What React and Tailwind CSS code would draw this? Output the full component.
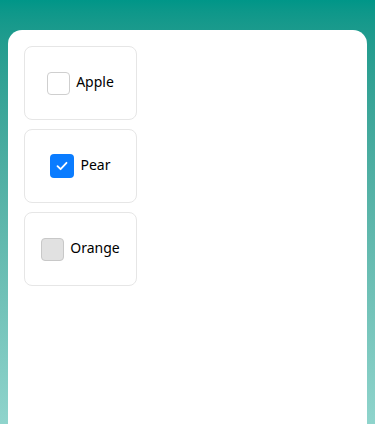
import React, { useState } from 'react'

const fruits = [
    { name: 'Apple', checked: false, disabled: false },
    { name: 'Pear', checked: true, disabled: false },
    { name: 'Orange', checked: false, disabled: true },
]

const FruitBox = ({ fruit }) => {
    const [checked, setChecked] = useState(fruit.checked)

    let boxClass = 'w-[23px] h-[23px] rounded-[4px] border border-[#cfcfcf] bg-white'
    if (checked) boxClass = 'w-[24px] h-[24px] rounded-[4px] bg-[#0a7cff] flex items-center justify-center'
    if (fruit.disabled) boxClass = 'w-[23px] h-[23px] rounded-[4px] border border-[#c8c8c8] bg-[#e1e1e1]'

    return (
        <div className="w-[113px] h-[74px] rounded-[8px] border border-[#e6e6e6] flex items-center justify-center">
            <label
                className="flex items-center gap-[6px]"
                onClick={() => !fruit.disabled && setChecked(!checked)}
            >
                <span className={boxClass}>
                    {checked && (
                        <svg width="14" height="14" viewBox="0 0 14 14" fill="none">
                            <path d="M2.5 7.2 L5.6 10.2 L11.5 3.8" stroke="white" strokeWidth="1.8" strokeLinecap="round" strokeLinejoin="round" />
                        </svg>
                    )}
                </span>
                <span className="text-[14px] leading-[18px] text-black -mt-[2px]">{fruit.name}</span>
            </label>
        </div>
    )
}

export default function App() {
    return (
        <div
            className="w-[375px] h-[424px] overflow-hidden bg-gradient-to-b from-[#009688] to-[#8fd4cc] pt-[30px] px-[8px]"
            style={{ fontFamily: '"Noto Sans", "Liberation Sans", sans-serif' }}
        >
            <div className="bg-white rounded-t-[14px] h-[420px] p-[16px] flex flex-col gap-[9px]">
                {fruits.map((fruit) => (
                    <FruitBox key={fruit.name} fruit={fruit} />
                ))}
            </div>
        </div>
    )
}
